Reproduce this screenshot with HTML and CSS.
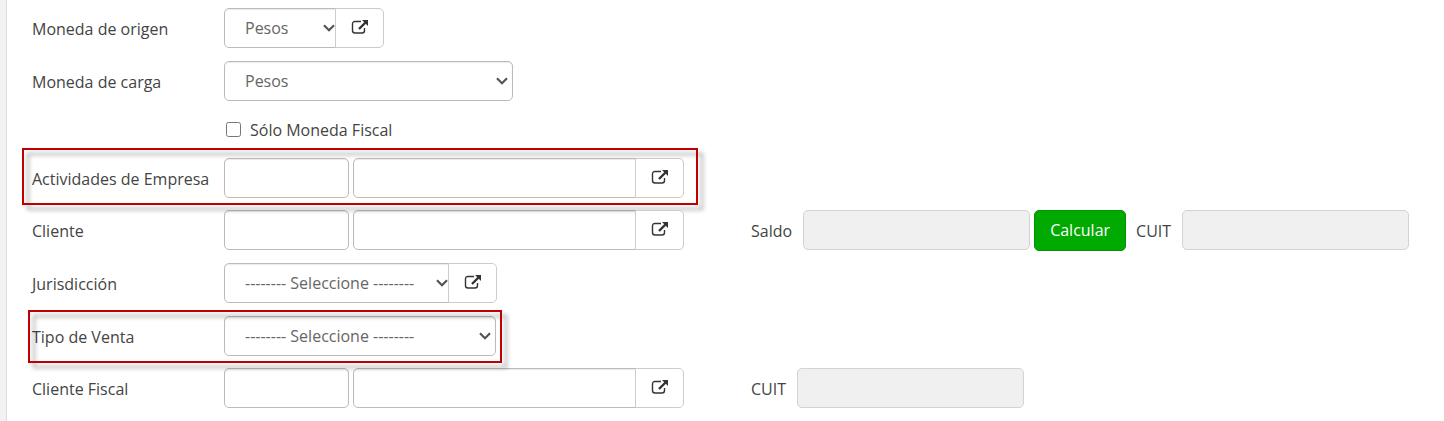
FILE: index.html
```html
<!DOCTYPE html>
<html lang="es">
<head>
  <meta charset="UTF-8" />
  <title>Comprobante de venta</title>
  <meta name="viewport" content="width=device-width, initial-scale=1" />
  <link rel="stylesheet" href="styles.css">
</head>
<body>

<svg class="sprite" aria-hidden="true">
  <symbol id="icon-open" viewBox="0 0 18 16">
    <path d="M10 2.5H4Q1.5 2.5 1.5 5V11.5Q1.5 14 4 14H11Q13.5 14 13.5 11.5V9" fill="none" stroke="currentColor" stroke-width="1.4"/>
    <path d="M8 10L14.5 3.5" fill="none" stroke="currentColor" stroke-width="2.4"/>
    <path d="M11 1H17V7Z" fill="currentColor"/>
  </symbol>
</svg>

<form class="form">
  <div class="row">
    <div class="field">
      <label for="monedaOrigen">Moneda de origen</label>
      <div class="group">
        <select id="monedaOrigen" class="control currency"><option>Pesos</option></select>
        <button type="button" class="open" aria-label="Abrir monedas"><svg><use href="#icon-open"/></svg></button>
      </div>
    </div>
  </div>

  <div class="row row-plain">
    <div class="field">
      <label for="monedaCarga">Moneda de carga</label>
      <select id="monedaCarga" class="control currency-load"><option>Pesos</option></select>
    </div>
  </div>

  <div class="row row-check">
    <label class="check"><input type="checkbox" id="monedaFiscal">Sólo Moneda Fiscal</label>
  </div>

  <div class="row row-plain">
    <div class="field marked marked-wide">
      <label for="actividad">Actividades de Empresa</label>
      <div class="group">
        <input type="text" id="actividad" class="control code">
        <input type="text" class="control name" aria-label="Nombre de la actividad">
        <button type="button" class="open" aria-label="Abrir actividades"><svg><use href="#icon-open"/></svg></button>
      </div>
    </div>
  </div>

  <div class="row">
    <div class="field">
      <label for="cliente">Cliente</label>
      <div class="group">
        <input type="text" id="cliente" class="control code">
        <input type="text" class="control name" aria-label="Nombre del cliente">
        <button type="button" class="open" aria-label="Abrir clientes"><svg><use href="#icon-open"/></svg></button>
      </div>
    </div>
    <div class="extra">
      <label for="saldo">Saldo</label>
      <input type="text" id="saldo" class="control total" disabled>
      <button type="button" class="calc">Calcular</button>
      <label for="cuit">CUIT</label>
      <input type="text" id="cuit" class="control total" disabled>
    </div>
  </div>

  <div class="row">
    <div class="field">
      <label for="jurisdiccion">Jurisdicción</label>
      <div class="group">
        <select id="jurisdiccion" class="control region"><option>-------- Seleccione --------</option></select>
        <button type="button" class="open" aria-label="Abrir jurisdicciones"><svg><use href="#icon-open"/></svg></button>
      </div>
    </div>
  </div>

  <div class="row row-plain">
    <div class="field marked marked-short">
      <label for="tipoVenta">Tipo de Venta</label>
      <select id="tipoVenta" class="control sale"><option>-------- Seleccione --------</option></select>
    </div>
  </div>

  <div class="row">
    <div class="field">
      <label for="clienteFiscal">Cliente Fiscal</label>
      <div class="group">
        <input type="text" id="clienteFiscal" class="control code">
        <input type="text" class="control name" aria-label="Nombre del cliente fiscal">
        <button type="button" class="open" aria-label="Abrir clientes fiscales"><svg><use href="#icon-open"/></svg></button>
      </div>
    </div>
    <div class="extra">
      <label for="cuitFiscal">CUIT</label>
      <input type="text" id="cuitFiscal" class="control total" disabled>
    </div>
  </div>
</form>

</body>
</html>
```
FILE: styles.css
```css
* {
  box-sizing: border-box;
}
body {
  margin: 0;
  padding-left: 6px;
  background: #f2f2f2;
  font-family: 'Open Sans', sans-serif;
  font-size: 16px;
  line-height: 24px;
  color: #444;
}
.sprite {
  display: none;
}
.form {
  display: flex;
  flex-direction: column;
  gap: 12px;
  min-height: 100vh;
  padding: 8px 25px 12px;
  background: #fff;
  border-left: 1px solid #ddd;
}
.row {
  display: grid;
  grid-template-columns: 719px 1fr;
  align-items: start;
  min-height: 41px;
}
.row-plain {
  min-height: 40px;
}
.row-check {
  min-height: 33px;
  align-items: center;
}
.field {
  display: flex;
  justify-self: start;
}
.field > label {
  width: 192px;
  padding-top: 9px;
}
.group {
  display: flex;
}
.control {
  height: 40px;
  margin: 0;
  padding: 0 16px;
  border: 1px solid #bbb;
  border-radius: 5px;
  background-color: #fff;
  box-shadow: inset 0 1px 1px rgba(0,0,0,0.08);
  font: inherit;
  color: #666;
}
.control:disabled {
  background-color: #f0f0f0;
  border-color: #d3d3d3;
  box-shadow: none;
}
select.control {
  appearance: none;
  padding: 0 20px;
  background-image: url("data:image/svg+xml,%3Csvg xmlns='http://www.w3.org/2000/svg' width='12' height='8'%3E%3Cpath d='M1 1.2L6 6.2L11 1.2' fill='none' stroke='%23555' stroke-width='2.2'/%3E%3C/svg%3E");
  background-repeat: no-repeat;
  background-position: right 4px center;
}
.code {
  width: 125px;
  margin-right: 4px;
}
.name {
  width: 287px;
}
.currency {
  width: 116px;
}
.currency-load {
  width: 289px;
}
.region {
  width: 229px;
}
.sale {
  width: 272px;
}
.total {
  width: 227px;
}
/* the button sits over the right end of the control before it */
.open {
  position: relative;
  display: flex;
  align-items: center;
  justify-content: center;
  width: 49px;
  height: 40px;
  margin-left: -5px;
  padding: 0 0 2px;
  border: 1px solid #ccc;
  border-radius: 0 5px 5px 0;
  background: #fff;
  color: #333;
  cursor: pointer;
}
.open svg {
  width: 18px;
  height: 16px;
}
.check {
  display: flex;
  align-items: center;
  gap: 9px;
  padding-left: 194px;
}
.check input {
  width: 15px;
  height: 15px;
  margin: 0;
}
.extra {
  display: flex;
}
.extra label {
  padding: 9px 11px 0 0;
}
.calc {
  height: 41px;
  margin: 0 10px 0 4px;
  padding: 0 15px 2px;
  border: 1px solid #009600;
  border-radius: 5px;
  background: #00aa00;
  font: inherit;
  font-weight: 500;
  color: #fff;
  cursor: pointer;
}
.marked {
  position: relative;
}
.marked::after {
  content: "";
  position: absolute;
  border: 2px solid #c00000;
  filter: drop-shadow(5px 5px 2px rgba(0,0,0,0.35));
  pointer-events: none;
}
.marked-wide::after {
  inset: -10px -14px -7px -10px;
}
.marked-short::after {
  inset: -6px -6px -7px -4px;
}
```
